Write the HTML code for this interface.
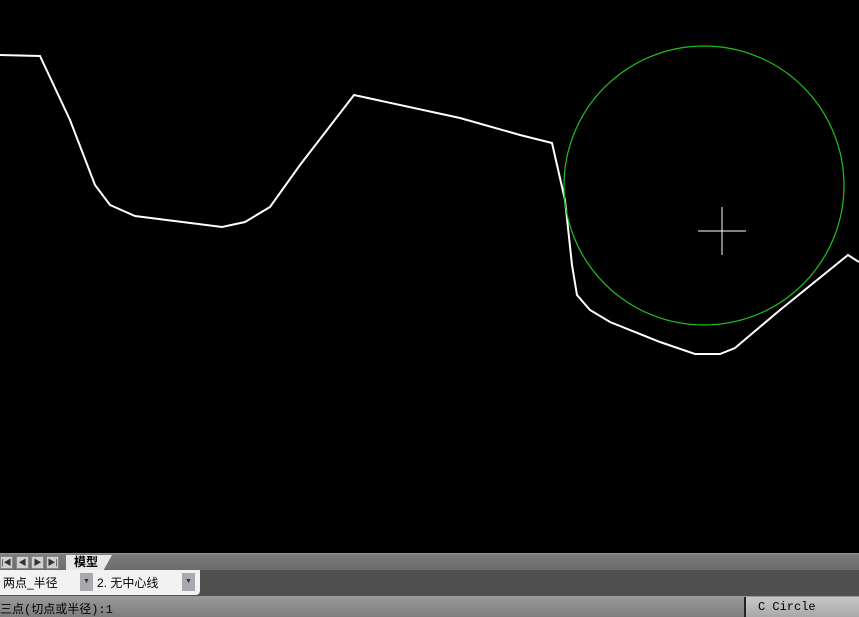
<!DOCTYPE html>
<html><head><meta charset="utf-8"><style>
html,body{margin:0;padding:0;width:859px;height:617px;overflow:hidden;background:#000;font-family:"Liberation Sans","Noto Sans CJK SC",sans-serif}
#tabs{position:absolute;left:0;top:553px;width:859px;height:17px;background:linear-gradient(#9a9a9a 0,#7a7a7a 2px,#6c6c6c 100%)}
#mid{position:absolute;left:0;top:570px;width:859px;height:26px;background:#505050}
#status{position:absolute;left:0;top:596px;width:859px;height:21px;background:linear-gradient(#9a9a9a,#7e7e7e);font-size:12px;color:#000}
.nb{position:absolute;top:556px;width:13px;height:13px;background:#d0d0d0;border:1px solid #888;box-sizing:border-box;font-size:8px;text-align:center;line-height:12px;color:#333}
</style></head><body>
<svg width="859" height="553" style="position:absolute;left:0;top:0">
<polyline fill="none" stroke="#fff" stroke-width="2" points="0,55 40,56 70,120 95,185 110,205 135,216 222,227 245,222 270,207 300,165 354,95 460,118 520,135 552,143 565,200 572,265 577,295 590,310 610,322 660,342 695,354 720,354 735,348 748,337 780,310 848,255 859,262"/>
<ellipse cx="704" cy="185.5" rx="140" ry="139.5" fill="none" stroke="#1fbf1f" stroke-width="1.2"/>
<line x1="698" y1="231" x2="746" y2="231" stroke="#fff"/>
<line x1="722" y1="207" x2="722" y2="255" stroke="#fff"/>
</svg>
<div id="tabs"></div>
<div class="nb" style="left:0">|◀</div><div class="nb" style="left:16px">◀</div><div class="nb" style="left:31px">▶</div><div class="nb" style="left:46px">▶|</div>
<div style="position:absolute;left:66px;top:555px;width:46px;height:15px;background:#e8e8e8;clip-path:polygon(0 0,100% 0,82% 100%,0 100%);font-size:12px;font-weight:bold;line-height:15px;padding-left:8px;box-sizing:border-box">模型</div>
<div id="mid"></div>
<div style="position:absolute;left:0;top:570px;width:200px;height:25px;background:#f2f2f2;border-radius:0 0 4px 0"></div>
<div style="position:absolute;left:3px;top:574px;font-size:12px">两点_半径</div>
<div style="position:absolute;left:80px;top:573px;width:13px;height:18px;background:#a8aab0;font-size:7px;color:#333;text-align:center;line-height:18px">▼</div>
<div style="position:absolute;left:97px;top:574px;font-size:12px">2. 无中心线</div>
<div style="position:absolute;left:182px;top:573px;width:13px;height:18px;background:#a8aab0;font-size:7px;color:#333;text-align:center;line-height:18px">▼</div>
<div id="status"><span style="position:absolute;left:0;top:4px;font-family:'Liberation Mono','Noto Sans CJK SC',monospace">三点(切点或半径):1</span></div>
<div style="position:absolute;left:744px;top:597px;width:2px;height:20px;background:#222"></div>
<div style="position:absolute;left:746px;top:597px;width:113px;height:20px;background:linear-gradient(#c8c8c8,#a8a8a8);font-family:'Liberation Mono',monospace;font-size:12px;line-height:20px;padding-left:12px;box-sizing:border-box">C Circle</div>
</body></html>
